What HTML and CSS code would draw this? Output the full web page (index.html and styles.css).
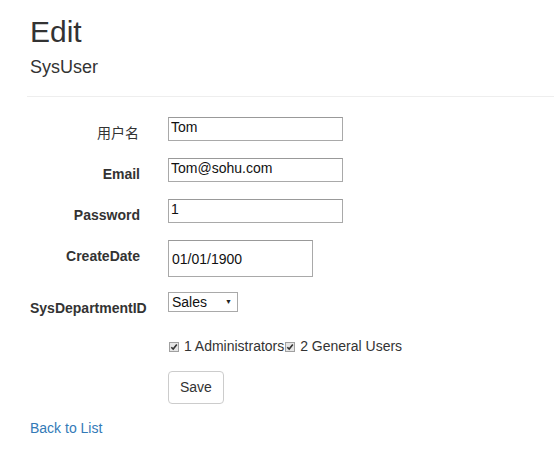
FILE: index.html
```html
<!DOCTYPE html>
<html lang="zh">
<head>
  <meta charset="UTF-8" />
  <title>Edit - SysUser</title>
  <link rel="stylesheet" href="styles.css">
</head>
<body>
  <div class="container">
    <h2 class="page-title">Edit</h2>
    <h4 class="page-sub">SysUser</h4>
    <hr class="divider" />

    <form class="form-horizontal">
      <div class="form-group">
        <label class="control-label cjk" for="name">用户名</label>
        <input class="text-box" id="name" type="text" value="Tom">
      </div>
      <div class="form-group">
        <label class="control-label" for="email">Email</label>
        <input class="text-box" id="email" type="text" value="Tom@sohu.com">
      </div>
      <div class="form-group">
        <label class="control-label" for="password">Password</label>
        <input class="text-box" id="password" type="text" value="1">
      </div>
      <div class="form-group">
        <label class="control-label" for="createdate">CreateDate</label>
        <input class="date-box" id="createdate" type="text" value="01/01/1900">
      </div>
      <div class="form-group">
        <label class="control-label" for="dept">SysDepartmentID</label>
        <span class="select-wrap">
          <select class="dept-select" id="dept">
            <option>Sales</option>
          </select>
          <span class="select-arrow">&#9660;</span>
        </span>
      </div>
      <div class="form-group">
        <div class="field-offset roles">
          <label class="role"><svg class="check" width="10" height="10" viewBox="0 0 10 10"><rect x="0.5" y="0.5" width="9" height="9" fill="#e6e6e6" stroke="#a0a0a0"/><path d="M2.3 5.2 L4.2 7.1 L7.8 2.6" fill="none" stroke="#333" stroke-width="1.6"/></svg> 1 Administrators</label><label class="role"><svg class="check" width="10" height="10" viewBox="0 0 10 10"><rect x="0.5" y="0.5" width="9" height="9" fill="#e6e6e6" stroke="#a0a0a0"/><path d="M2.3 5.2 L4.2 7.1 L7.8 2.6" fill="none" stroke="#333" stroke-width="1.6"/></svg> 2 General Users</label>
        </div>
      </div>
      <div class="form-group">
        <div class="field-offset">
          <button type="button" class="btn">Save</button>
        </div>
      </div>
    </form>

    <div class="back">
      <a href="#">Back to List</a>
    </div>
  </div>
</body>
</html>
```

FILE: styles.css
```css
* {
  margin: 0;
  padding: 0;
  box-sizing: border-box;
}
body {
  background-color: #fff;
  color: #333;
  font-family: "Liberation Sans", Arial, sans-serif;
  font-size: 14px;
  line-height: 20px;
  overflow: hidden;
}
.container {
  padding: 15px 0 0 30px;
}
/* Title */
.page-title {
  font-size: 30px;
  font-weight: normal;
  line-height: 33px;
  color: #333;
}
.page-sub {
  font-size: 18px;
  font-weight: normal;
  line-height: 20px;
  margin-top: 9px;
}
.divider {
  border: none;
  border-top: 1px solid #eee;
  margin: 19px 0 20px -3px;
}
/* Form rows */
.form-group {
  display: grid;
  grid-template-columns: 110px auto;
  column-gap: 28px;
  justify-content: start;
  align-items: start;
  margin-bottom: 15px;
}
.control-label {
  font-weight: bold;
  text-align: right;
  white-space: nowrap;
  padding-top: 6px;
}
.control-label.cjk {
  font-weight: normal;
  font-family: "Liberation Sans", "Noto Sans CJK SC", sans-serif;
  padding-right: 1px;
}
.text-box,
.date-box {
  font-family: "Liberation Sans", Arial, sans-serif;
  font-size: 14px;
  color: #111;
  border: 1px solid #a9a9a9;
  border-top-color: #999;
  background: #fff;
  outline: none;
}
.text-box {
  width: 175px;
  height: 24px;
  padding: 0 2px 4px 2px;
}
.date-box {
  width: 145px;
  height: 37px;
  padding: 0 3px;
}
.select-wrap {
  position: relative;
  display: inline-block;
  width: 70px;
  height: 20px;
}
.dept-select {
  appearance: none;
  -webkit-appearance: none;
  width: 70px;
  height: 20px;
  border: 1px solid #a9a9a9;
  border-radius: 0;
  background: #fff;
  font-family: "Liberation Sans", Arial, sans-serif;
  font-size: 14px;
  color: #111;
  padding: 0 3px;
  outline: none;
}
.select-arrow {
  position: absolute;
  right: 6px;
  top: 6px;
  font-size: 7px;
  line-height: 7px;
  color: #222;
  pointer-events: none;
}
.field-offset {
  grid-column: 2;
}
.roles {
  padding-top: 3px;
  white-space: nowrap;
}
.role {
  font-weight: normal;
}
.check {
  margin-left: 1px;
  margin-right: 1px;
  vertical-align: -1px;
}
.btn {
  font-family: "Liberation Sans", Arial, sans-serif;
  font-size: 14px;
  line-height: 19px;
  color: #333;
  background: #fff;
  border: 1px solid #ccc;
  border-radius: 4px;
  padding: 6px 11px;
  height: 33px;
}
.back {
  margin-top: -1px;
}
.back a {
  color: #337ab7;
  text-decoration: none;
}
```
